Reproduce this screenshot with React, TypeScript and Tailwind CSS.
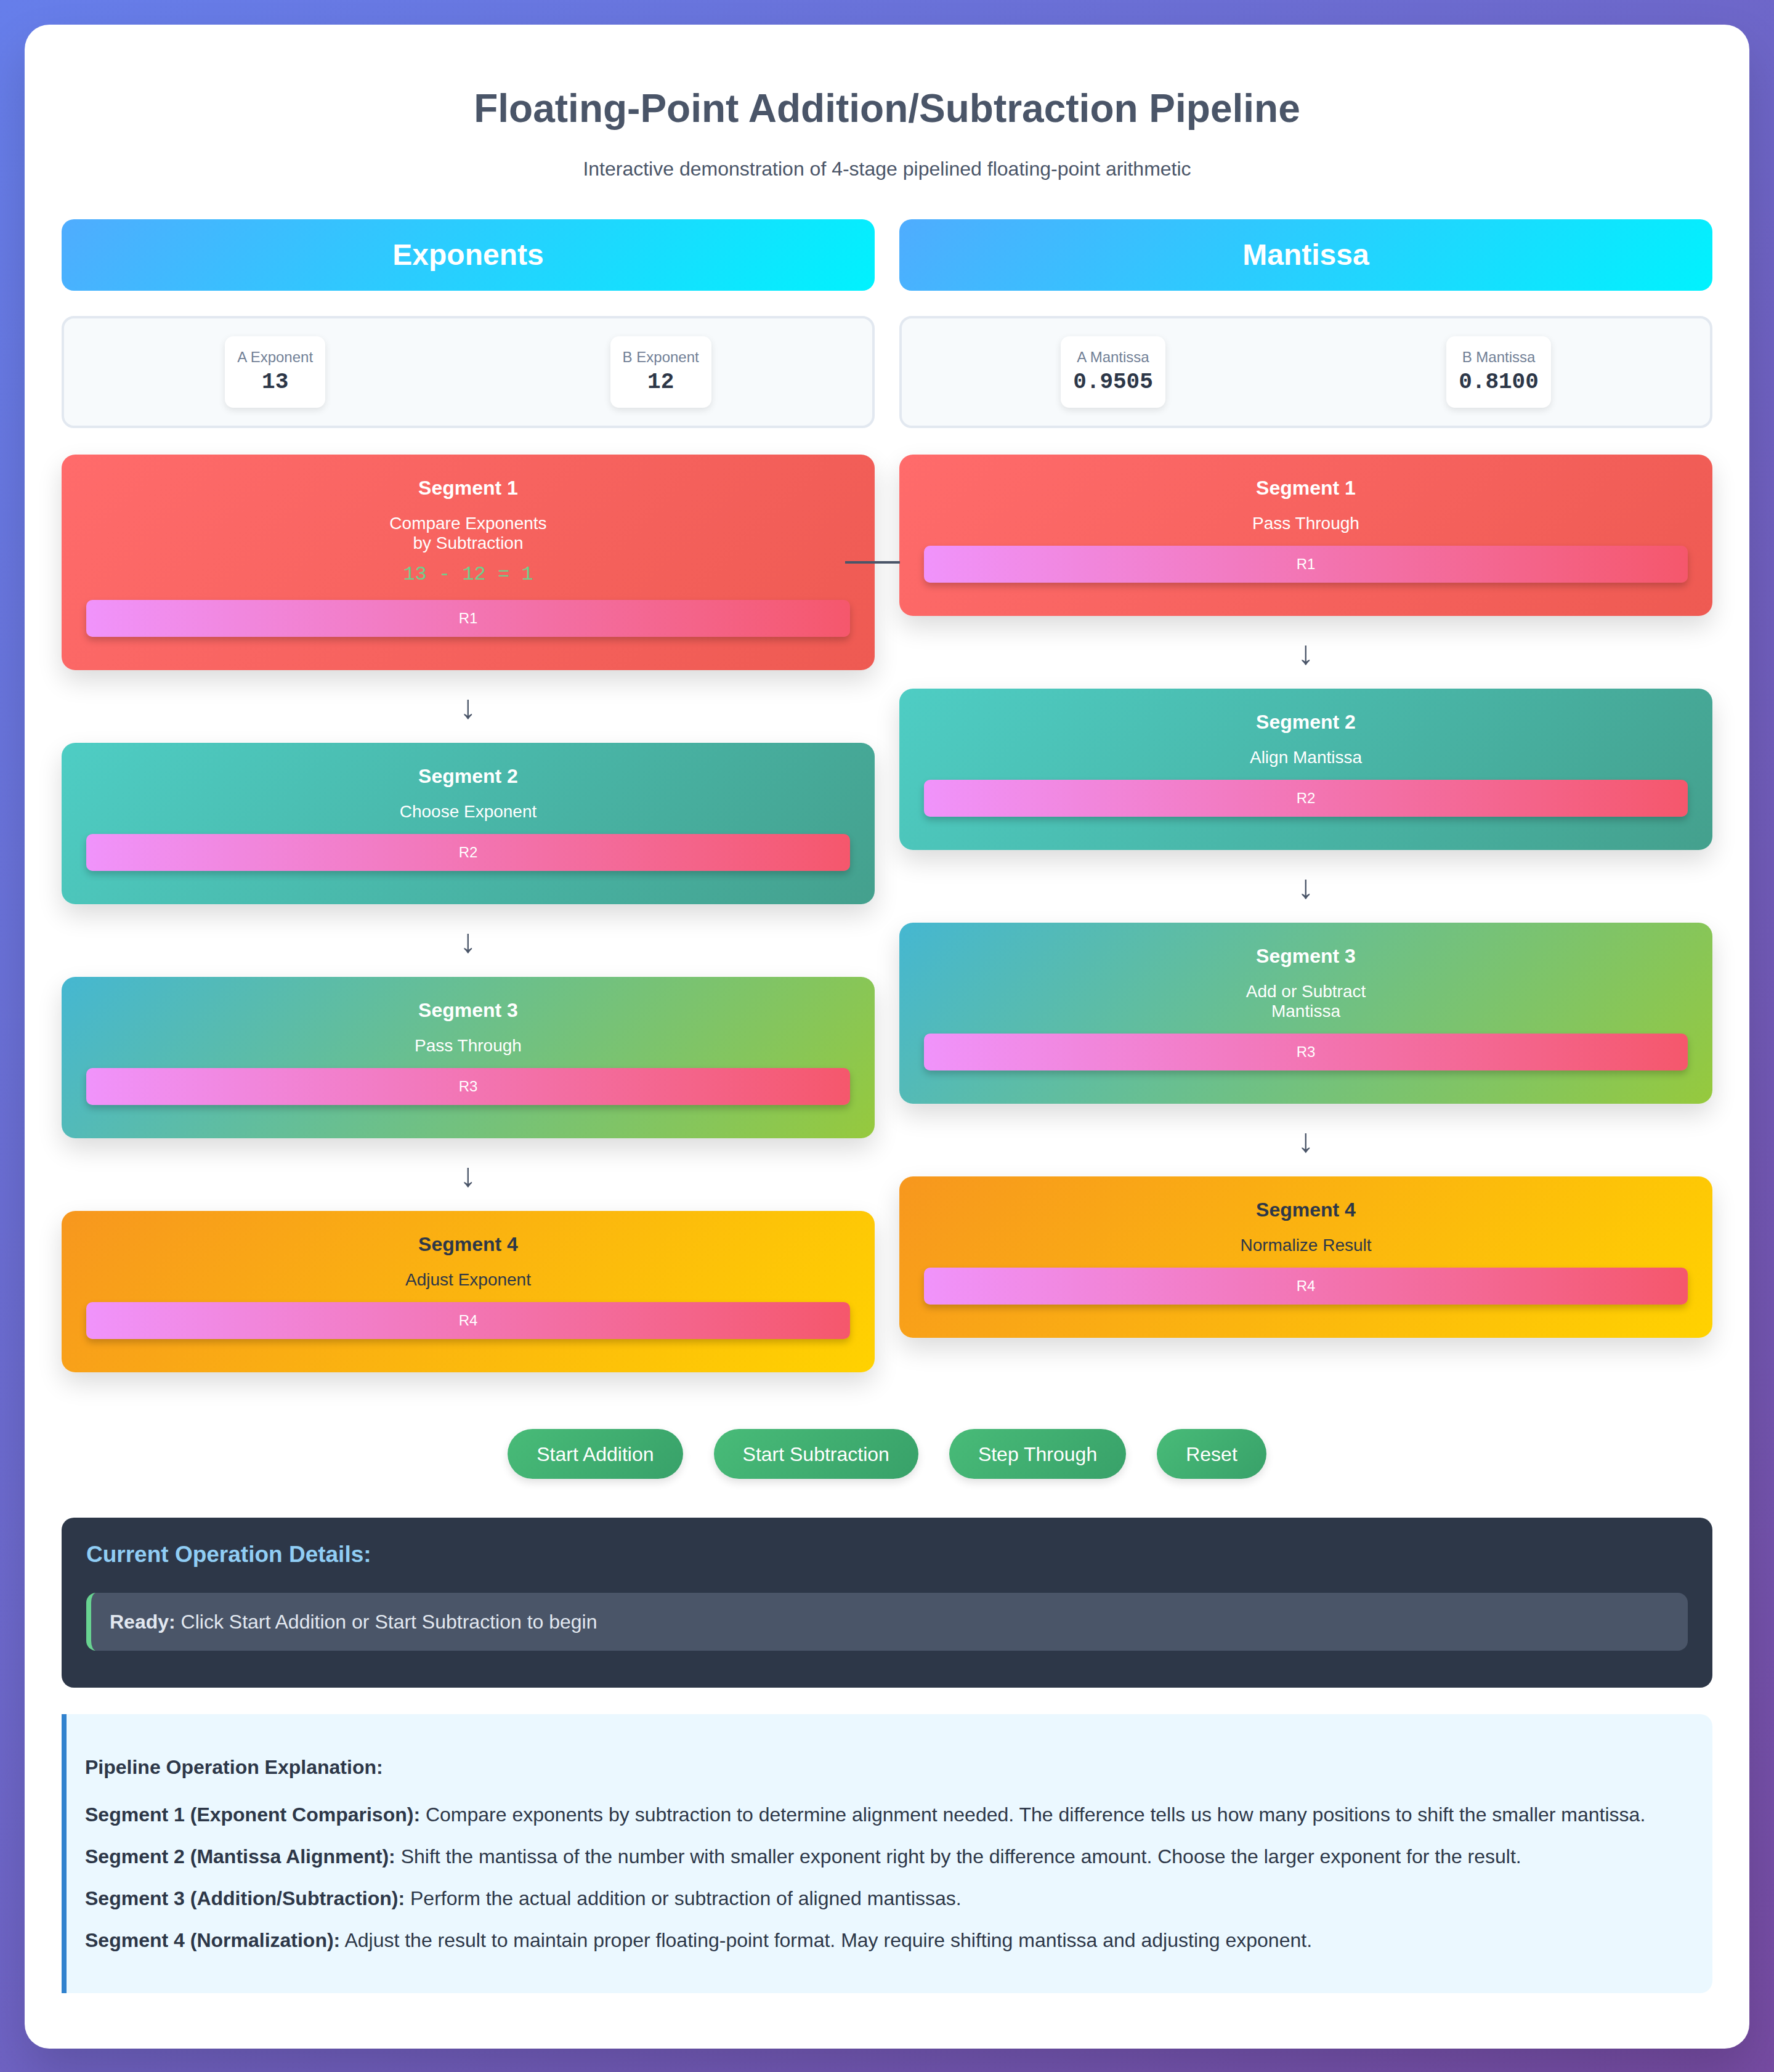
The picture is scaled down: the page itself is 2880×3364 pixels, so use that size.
import React from 'react';

type Segment = {
  title: string;
  desc: string[];
  calc?: string;
  reg: string;
  bg: string;
  dark?: boolean;
  link?: boolean;
};

const EXPONENT_SEGMENTS: Segment[] = [
  {
    title: 'Segment 1',
    desc: ['Compare Exponents', 'by Subtraction'],
    calc: '13 - 12 = 1',
    reg: 'R1',
    bg: 'bg-[linear-gradient(135deg,#ff6b6b,#ee5a52)]',
    link: true,
  },
  { title: 'Segment 2', desc: ['Choose Exponent'], reg: 'R2', bg: 'bg-[linear-gradient(135deg,#4ecdc4,#44a08d)]' },
  { title: 'Segment 3', desc: ['Pass Through'], reg: 'R3', bg: 'bg-[linear-gradient(135deg,#45b7d1,#96c93d)]' },
  { title: 'Segment 4', desc: ['Adjust Exponent'], reg: 'R4', bg: 'bg-[linear-gradient(135deg,#f7971e,#ffd200)]', dark: true },
];

const MANTISSA_SEGMENTS: Segment[] = [
  { title: 'Segment 1', desc: ['Pass Through'], reg: 'R1', bg: 'bg-[linear-gradient(135deg,#ff6b6b,#ee5a52)]' },
  { title: 'Segment 2', desc: ['Align Mantissa'], reg: 'R2', bg: 'bg-[linear-gradient(135deg,#4ecdc4,#44a08d)]' },
  { title: 'Segment 3', desc: ['Add or Subtract', 'Mantissa'], reg: 'R3', bg: 'bg-[linear-gradient(135deg,#45b7d1,#96c93d)]' },
  { title: 'Segment 4', desc: ['Normalize Result'], reg: 'R4', bg: 'bg-[linear-gradient(135deg,#f7971e,#ffd200)]', dark: true },
];

const EXPLANATIONS = [
  ['Segment 1 (Exponent Comparison):', 'Compare exponents by subtraction to determine alignment needed. The difference tells us how many positions to shift the smaller mantissa.'],
  ['Segment 2 (Mantissa Alignment):', 'Shift the mantissa of the number with smaller exponent right by the difference amount. Choose the larger exponent for the result.'],
  ['Segment 3 (Addition/Subtraction):', 'Perform the actual addition or subtraction of aligned mantissas.'],
  ['Segment 4 (Normalization):', 'Adjust the result to maintain proper floating-point format. May require shifting mantissa and adjusting exponent.'],
];

function ValueBox({ label, value }: { label: string; value: string }) {
  return (
    <div className="rounded-[14px] bg-white px-[20px] py-[20px] text-center shadow-[0_4px_12px_rgba(0,0,0,0.1)]">
      <div className="text-[24px] leading-[28px] text-[#718096]">{label}</div>
      <div className="mt-[6px] font-['Liberation_Mono','Courier_New',monospace] text-[36px] font-bold leading-[42px] text-[#2d3748]">
        {value}
      </div>
    </div>
  );
}

function SegmentCard({ seg }: { seg: Segment }) {
  const text = seg.dark ? 'text-[#2d3748]' : 'text-white';
  return (
    <div className={`relative rounded-[22px] px-[40px] pt-[36px] pb-[54px] text-center shadow-[0_18px_40px_rgba(0,0,0,0.14)] ${seg.bg} ${text}`}>
      <div className="text-[32px] font-bold leading-[36px]">{seg.title}</div>
      <div className="mt-[24px] text-[28px] leading-[32px]">
        {seg.desc.map((d) => (
          <div key={d}>{d}</div>
        ))}
      </div>
      {seg.calc && (
        <div className="mt-[16px] font-['Liberation_Mono','Courier_New',monospace] text-[32px] leading-[38px] text-[#6fd08c]">
          {seg.calc}
        </div>
      )}
      <div
        className={`${seg.calc ? 'mt-[22px]' : 'mt-[20px]'} flex h-[60px] items-center justify-center rounded-[10px] bg-[linear-gradient(90deg,#f093fb,#f5576c)] text-[24px] text-white shadow-[0_6px_12px_rgba(0,0,0,0.2)]`}
      >
        {seg.reg}
      </div>
      {seg.link && <div className="absolute top-1/2 right-[-41px] z-10 h-[4px] w-[89px] -translate-y-1/2 bg-[#4a5568]" />}
    </div>
  );
}

function Column({
  title,
  values,
  segments,
}: {
  title: string;
  values: [string, string][];
  segments: Segment[];
}) {
  return (
    <div className="flex flex-col">
      <div className="flex h-[116px] items-center justify-center rounded-[20px] bg-[linear-gradient(135deg,#4facfe,#00f2fe)] text-[48px] font-bold text-white">
        {title}
      </div>
      <div className="mt-[41px] flex h-[182px] items-center justify-around rounded-[20px] border-[4px] border-[#e2e8f0] bg-[#f7fafc] px-[30px]">
        {values.map(([l, v]) => (
          <ValueBox key={l} label={l} value={v} />
        ))}
      </div>
      <div className="mt-[43px] flex flex-col">
        {segments.map((s, i) => (
          <React.Fragment key={s.title}>
            {i > 0 && (
              <div className="flex h-[118px] items-center justify-center text-[54px] leading-none text-[#4a5568]">↓</div>
            )}
            <SegmentCard seg={s} />
          </React.Fragment>
        ))}
      </div>
    </div>
  );
}

export default function App() {
  return (
    <div className="min-h-screen bg-[linear-gradient(135deg,#667eea,#764ba2)] p-[40px] font-['Liberation_Sans',Arial,sans-serif]">
      <div className="rounded-[40px] bg-white px-[60px] pt-[99px] pb-[90px] shadow-[0_40px_80px_rgba(0,0,0,0.15)]">
        <h1 className="text-center text-[64px] font-bold leading-[74px] text-[#4a5568]">
          Floating-Point Addition/Subtraction Pipeline
        </h1>
        <p className="mt-[43px] text-center text-[32px] leading-[37px] text-[#4a5568]">
          Interactive demonstration of 4-stage pipelined floating-point arithmetic
        </p>

        <div className="mt-[63px] grid grid-cols-2 items-start gap-[40px]">
          <Column
            title="Exponents"
            values={[
              ['A Exponent', '13'],
              ['B Exponent', '12'],
            ]}
            segments={EXPONENT_SEGMENTS}
          />
          <Column
            title="Mantissa"
            values={[
              ['A Mantissa', '0.9505'],
              ['B Mantissa', '0.8100'],
            ]}
            segments={MANTISSA_SEGMENTS}
          />
        </div>

        {/* controls */}
        <div className="mt-[92px] flex justify-center gap-[50px]">
          {['Start Addition', 'Start Subtraction', 'Step Through', 'Reset'].map((b) => (
            <button
              key={b}
              className="h-[81px] rounded-full bg-[linear-gradient(135deg,#48bb78,#38a169)] px-[47px] text-[32px] text-white shadow-[0_6px_14px_rgba(0,0,0,0.12)]"
            >
              {b}
            </button>
          ))}
        </div>

        {/* current operation */}
        <div className="mt-[63px] rounded-[20px] bg-[#2d3748] px-[40px] pt-[38px] pb-[60px]">
          <h3 className="text-[37px] font-bold leading-[44px] text-[#90cdf4]">Current Operation Details:</h3>
          <div className="mt-[40px] rounded-[16px] border-l-[8px] border-[#68d391] bg-[#4a5568] px-[30px] py-[28px] text-[32px] leading-[38px] text-[#e2e8f0]">
            <strong>Ready:</strong> Click Start Addition or Start Subtraction to begin
          </div>
        </div>

        {/* explanation */}
        <div className="mt-[43px] rounded-r-[20px] border-l-[8px] border-[#3182ce] bg-[#ebf8ff] px-[30px] pt-[68px] pb-[62px] text-[32px] text-[#2d3748]">
          <h4 className="mb-[34px] font-bold leading-[37px]">Pipeline Operation Explanation:</h4>
          {EXPLANATIONS.map(([head, body], i) => (
            <p key={head} className={`leading-[48px] ${i < EXPLANATIONS.length - 1 ? 'mb-[20px]' : ''}`}>
              <strong>{head}</strong> {body}
            </p>
          ))}
        </div>
      </div>
    </div>
  );
}
